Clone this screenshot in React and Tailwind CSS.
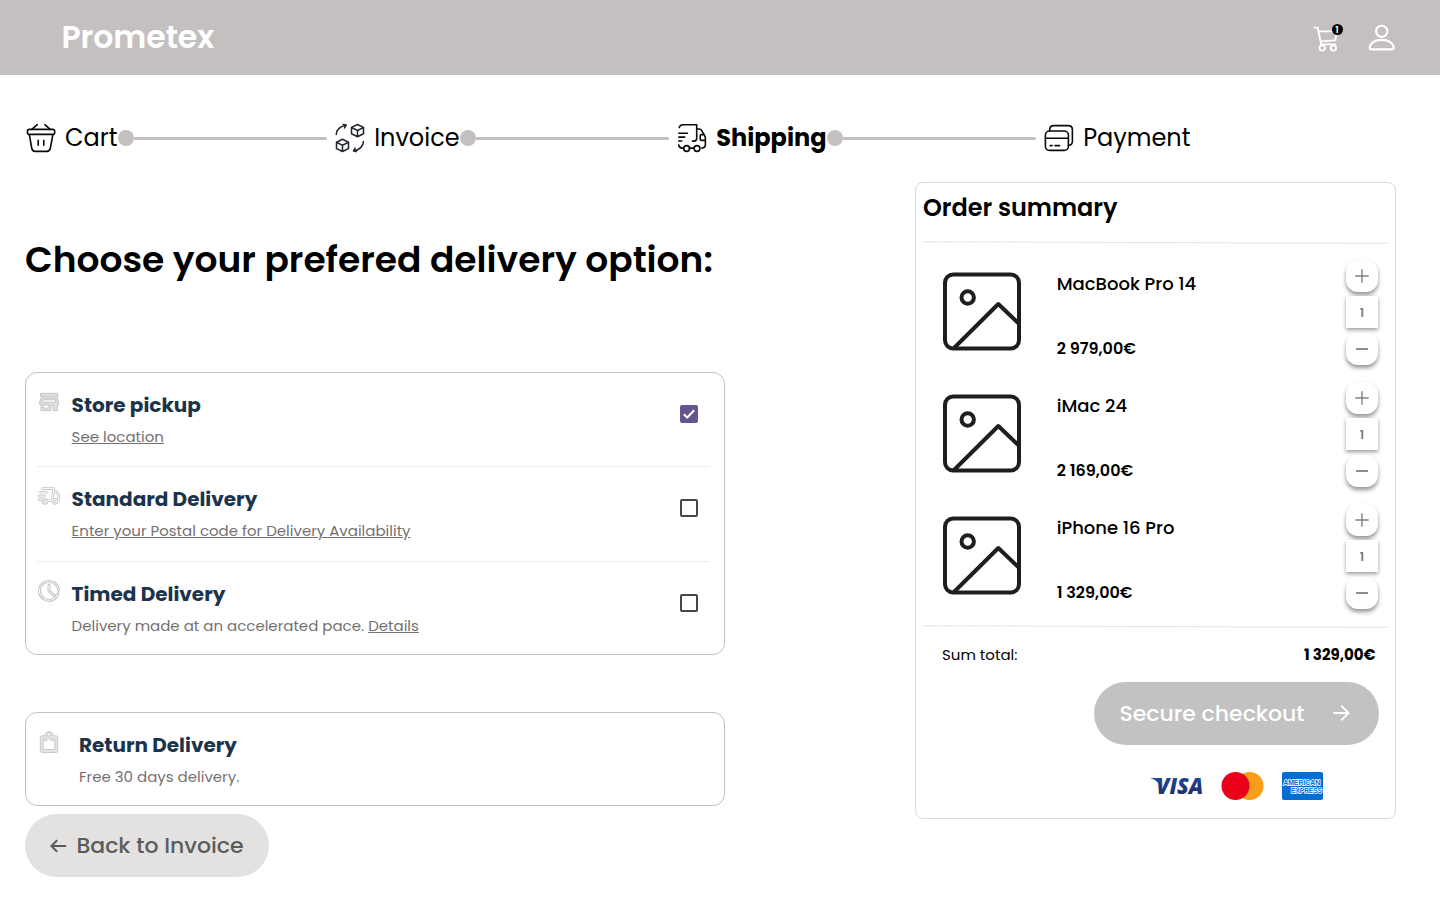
function BasketIcon() {
  return (
    <svg className="size-8 shrink-0" viewBox="0 0 32 32" fill="none" stroke="#0a0a0a" strokeWidth="1.6" strokeLinecap="round" strokeLinejoin="round">
      <path d="M12.300 2.700 6.800 7.400M19.900 2.700l5.300 4.700" />
      <rect x="2.400" y="7.400" width="27.300" height="5" rx="2" />
      <path d="m4.400 12.800 2.300 13.200c.4 2.400 1.200 3.400 3.600 3.400h11.400c2.400 0 3.300-1 3.700-3.400L27.800 12.800M13.200 18.400v4.800M18.800 18.400v4.800" />
    </svg>
  );
}

function TransferIcon() {
  return (
    <svg className="size-8 shrink-0" viewBox="0 0 32 32" fill="none" stroke="#20252e" strokeWidth="1.55" strokeLinecap="round" strokeLinejoin="round">
      <path d="M23.500 2.500 29.500 5.400v6.400L23.500 14.700l-6-2.900V5.400zM17.700 5.600 23.500 8.500l5.800-2.900M23.500 8.500v5.800" />
      <path d="m8.500 17.300 6 2.900v6.400l-6 2.900-6-2.900v-6.400zM2.700 20.400l5.800 2.900 5.800-2.900M8.500 23.300v5.800" />
      <path d="M2.300 12.400C2.300 8 6.200 3.900 12 3.200M9.300 2.400l2.900.7-1.600 2.800" />
      <path d="M29.400 19.600c0 4.400-3.900 8.500-9.700 9.200M22.400 29.600l-2.900-.7 1.600-2.800" />
    </svg>
  );
}

function TruckIcon() {
  return (
    <svg className="size-8 shrink-0" viewBox="0 0 32 32" fill="none" stroke="#0a0a0a" strokeWidth="1.6" strokeLinecap="round" strokeLinejoin="round">
      <path d="M3.200 5.400c.6-1.700 1.900-2.700 4-2.700h13.500v13.500c0 1.700-1.200 2.900-2.900 2.900h-1.400" />
      <path d="M20.700 7h2.500c1 0 1.900.5 2.400 1.400l3 5.300c.7 1.200.8 1.700.8 3v5.800c0 2.300-1.300 3.600-3.600 3.600" />
      <path d="M25.400 12.600c-.8 0-1.200.5-1.200 1.300V17c0 .9.500 1.400 1.400 1.400h3.700M25.400 12.600h2.500" />
      <path d="M2.700 23c.4 1.900 1.700 3.100 3.500 3.100h1.400M13.600 26.100h4.300" />
      <circle cx="10.600" cy="26.500" r="2.900" />
      <circle cx="21" cy="26.500" r="2.900" />
      <path d="M2.800 11.200h8.600M2.800 15.100h5.900M2.800 19h3" />
    </svg>
  );
}

function CardsIcon() {
  return (
    <svg className="size-8 shrink-0" viewBox="0 0 32 32" fill="none" stroke="#0a0a0a" strokeWidth="1.6" strokeLinecap="round" strokeLinejoin="round">
      <rect x="2.400" y="9" width="23" height="19.400" rx="4.200" />
      <path d="M6.700 8.900V7.800c0-2.700 1.500-4.200 4.200-4.200h14.300c2.700 0 4.200 1.500 4.200 4.200v11.500c0 2.600-1.300 4-3.900 4.200M2.400 16.200h22.900M7.200 23.600h1.900M12 23.600h4.600" />
    </svg>
  );
}

function CartIcon() {
  return (
    <svg className="h-8 w-8" viewBox="0 0 32 32" fill="none" stroke="#fff" strokeWidth="1.8" strokeLinecap="round" strokeLinejoin="round">
      <path d="M1.500 5.700h3.200L8.200 22.200M5.800 9.300h18.200l-1.800 9L8.500 19.300M8 22.300h14.600" />
      <circle cx="9.200" cy="26" r="2.700" />
      <circle cx="20.400" cy="26" r="2.700" />
    </svg>
  );
}

function UserIcon() {
  return (
    <svg className="h-8 w-8" viewBox="0 0 32 32" fill="none" stroke="#fff" strokeWidth="2.100">
      <circle cx="15.700" cy="9.300" r="5.600" />
      <path d="M3.700 26c0-4.700 5.100-8.100 12-8.100s12 3.400 12 8.100c0 .9-.4 1.400-1.300 1.400H5C4.100 27.400 3.700 26.900 3.700 26Z" />
    </svg>
  );
}

function Outlined({ d, width = "2.9" }) {
  return (
    <svg className="size-6" viewBox="0 0 24 24" fill="none" strokeLinecap="round" strokeLinejoin="round">
      <path d={d} stroke="#c6c2c1" strokeWidth={width} />
      <path d={d} stroke="#fff" strokeWidth="1" />
    </svg>
  );
}

function StoreIcon() {
  return (
    <svg className="size-6" viewBox="0 0 24 24" fill="none" stroke="#c6c2c1" strokeWidth="0.9" strokeLinejoin="round">
      <path d="M3.500 3.300h17.300v3.600H3.500z" fill="#dedbda" />
      <path d="M3.900 8.100h16.500l1.300 4.200v2h-1.200v6.400h-4.200v-5.400h-2.200v5.400H4V14.300H2.600v-2z" fill="#e0dddc" />
      <path d="M6.200 9.800h12l.6 2.400H5.500z" fill="#fff" />
      <path d="M6.300 15h5.600v3.100H6.300z" fill="#fff" />
    </svg>
  );
}

function BagIcon() {
  return (
    <svg className="size-6" viewBox="0 0 24 24" fill="none" stroke="#c9c5c4" strokeWidth="0.9" strokeLinejoin="round">
      <path d="M7.800 4.800C8 2.300 9.500.6 12 .6s4 1.700 4.200 4.200h3c.9 0 1.500.6 1.500 1.500v13.700c0 .9-.6 1.500-1.500 1.500H4.800c-.9 0-1.500-.6-1.500-1.500V6.300c0-.9.600-1.500 1.500-1.500z" fill="#e6e4e3" />
      <path d="M10 4.800c.1-1.400.8-2.200 2-2.200s1.900.8 2 2.200z" fill="#fff" />
      <path d="M6.200 8h1.600v1.800h1.900V8h4.600v1.800h1.900V8h1.600v10.500H6.200z" fill="#fff" />
    </svg>
  );
}

const truckPath = "M5.800 4.600h11l-1.600 11.500M17 8h2.700l2.300 3.700-.8 4.700h-.8M3.500 8.300h6M2 12.100h5.500M2.500 15.900h2.500M10.800 16.700h4.600M9.800 17.500a1.900 1.900 0 1 1-3.800 0a1.900 1.900 0 1 1 3.800 0M20 17.500a1.900 1.900 0 1 1-3.800 0a1.900 1.900 0 1 1 3.800 0";
const clockPath = "M21.100 14.700A9.500 9.500 0 1 1 21.500 11.500M12 6.200v5.600l5.200 5M18.700 17.200l.8-.8";

const steps = [
  { label: "Cart", icon: <BasketIcon /> },
  { label: "Invoice", icon: <TransferIcon /> },
  { label: "Shipping", icon: <TruckIcon />, active: true },
  { label: "Payment", icon: <CardsIcon /> },
];

function Header() {
  return (
    <header className="flex h-[75px] items-center justify-between bg-[#c4c0bf] pr-[42px] pl-[61.500px]">
      <div className="mb-px text-[31.500px] leading-[48px] font-semibold tracking-[-0.050px] text-white">Prometex</div>
      <div className="flex items-center gap-[21px]">
        <div className="relative">
          <CartIcon />
          <span className="absolute top-[2px] left-[18.500px] flex size-[11px] items-center justify-center rounded-full bg-black pt-px text-[9.500px] leading-none font-semibold text-white">1</span>
        </div>
        <UserIcon />
      </div>
    </header>
  );
}

function Stepper() {
  return (
    <nav className="flex h-9 items-center">
      {steps.map((s, i) => (
        <div key={s.label} className="flex items-center">
          {s.icon}
          <span className={s.active ? "ml-2 text-2xl font-bold" : "ml-2 text-2xl"}>{s.label}</span>
          {i < steps.length - 1 && (
            <div className="mr-[7.100px] ml-[0.500px] flex w-[209.100px] items-center">
              <span className="size-4 shrink-0 rounded-full bg-[#c4c0bf]" />
              <span className="h-[3px] flex-1 rounded-r-full bg-[#c4c0bf]" />
            </div>
          )}
        </div>
      ))}
    </nav>
  );
}

function Checkbox({ checked }) {
  if (!checked) return <span className="mt-[32px] size-[18px] rounded-[2px] border-2 border-[#49454f]" />;
  return (
    <span className="mt-[32px] flex size-[18px] items-center justify-center rounded-[2px] bg-[#65558f]">
      <svg className="size-[18px]" viewBox="0 0 18 18" fill="none" stroke="#fff" strokeWidth="2">
        <path d="m3.800 9.200 3.400 3.300 7-7.200" />
      </svg>
    </span>
  );
}

function Option({ icon, title, checked, last, children }) {
  return (
    <div className={last ? "flex h-[94px] items-start" : "flex h-[94.300px] items-start border-b border-[#ececec]"}>
      <div className="mt-[17px] w-[34.600px]">{icon}</div>
      <div className="mt-[17px] flex-1">
        <h3 className="text-xl leading-[30px] font-bold text-[#1c344b]">{title}</h3>
        <p className="mt-[6px] text-[15px] leading-[22px] text-[#757070]">{children}</p>
      </div>
      <div className="flex w-[30px]"><Checkbox checked={checked} /></div>
    </div>
  );
}

function QuantityCell({ children, square }) {
  return (
    <div className={square
      ? "flex size-8 items-center justify-center bg-white pt-px text-xs font-semibold text-[#7a7a7a] shadow-[0_2px_4px_rgba(0,0,0,0.4)]"
      : "flex size-8 items-center justify-center rounded-xl bg-white shadow-[0_3px_4px_rgba(0,0,0,0.42)]"}>
      {children}
    </div>
  );
}

function Quantity() {
  return (
    <div className="flex flex-col gap-[4.800px]">
      <QuantityCell>
        <svg className="size-4" viewBox="0 0 16 16" stroke="#828282" strokeWidth="1.400"><path d="M1.300 8h13.400M8 1.300v13.400" /></svg>
      </QuantityCell>
      <QuantityCell square>1</QuantityCell>
      <QuantityCell>
        <svg className="size-4" viewBox="0 0 16 16" stroke="#828282" strokeWidth="1.800"><path d="M2 8h12" /></svg>
      </QuantityCell>
    </div>
  );
}

function Item({ name, price }) {
  return (
    <div className="flex h-[122px] items-start pr-[17px] pl-[27px]">
      <svg className="mt-[13px] size-[78px] overflow-visible" viewBox="0 0 78 78" fill="none" stroke="#1e1e1e" strokeWidth="4">
        <rect x="2" y="1.500" width="74" height="74" rx="8.200" />
        <circle cx="24.700" cy="24.500" r="6.200" />
        <path d="m11 75 44.300-44L76 50.800" strokeLinejoin="round" />
      </svg>
      <div className="ml-[35.700px] flex-1">
        <p className="mt-[10px] text-lg leading-[28px] font-medium">{name}</p>
        <p className="mt-[39px] text-base leading-6 font-semibold">{price}</p>
      </div>
      <Quantity />
    </div>
  );
}

function Payments() {
  return (
    <div className="mt-[27px] ml-[234px] flex items-center">
      <svg className="h-7 w-[54px] overflow-visible" viewBox="0 0 54 28">
        <defs>
          <linearGradient id="visa" x1="0" y1="0" x2="0" y2="1">
            <stop offset="0" stopColor="#2151a3" />
            <stop offset="1" stopColor="#212560" />
          </linearGradient>
        </defs>
        <path d="M.5 6h7c1.400 0 2 .5 2.300 1.800l1.500 8C9 11 5.600 7.500.5 6.300Z" fill="url(#visa)" />
        <text x="6.300" y="22.200" textLength="47" lengthAdjust="spacingAndGlyphs" fontFamily="Open Sans, sans-serif" fontStyle="italic" fontWeight="800" fontSize="22.500" fill="url(#visa)">VISA</text>
      </svg>
      <svg className="ml-[17px] h-7 w-[43px]" viewBox="0 0 43 28">
        <circle cx="28.500" cy="14" r="14" fill="#f79f1a" />
        <circle cx="14.500" cy="14" r="14" fill="#ea001b" />
      </svg>
      <svg className="ml-[18px] h-7 w-[41px] overflow-visible" viewBox="0 0 41 28">
        <rect width="41" height="28" rx="2" fill="#016fd0" />
        <g fontFamily="Liberation Sans, sans-serif" fontWeight="700" fontSize="7.500" fill="#016fd0" stroke="#fff" strokeWidth="1.500" paintOrder="stroke">
          <text x="1.200" y="13" textLength="37" lengthAdjust="spacingAndGlyphs">AMERICAN</text>
          <text x="9" y="21.300" textLength="31" lengthAdjust="spacingAndGlyphs">EXPRESS</text>
        </g>
      </svg>
    </div>
  );
}

export default function App() {
  return (
    <div className="h-[900px] overflow-hidden bg-white font-['Poppins',sans-serif] text-black">
      <Header />
      <div className="pt-[45px] pr-11 pl-[25px]">
        <Stepper />
        <div className="mt-[26px] flex items-start justify-between">
          <main className="w-[700px]">
            <h1 className="mt-[51px] text-4xl leading-[54px] font-semibold whitespace-nowrap">Choose your prefered delivery option:</h1>
            <section className="mt-[85px] h-[283px] rounded-xl border border-[#c4c0bf] pr-[14px] pl-[11px]">
              <Option icon={<StoreIcon />} title="Store pickup" checked><a className="underline">See location</a></Option>
              <Option icon={<Outlined d={truckPath} width="2.600" />} title="Standard Delivery"><a className="underline">Enter your Postal code for Delivery Availability</a></Option>
              <Option icon={<Outlined d={clockPath} />} title="Timed Delivery" last>Delivery made at an accelerated pace. <a className="underline">Details</a></Option>
            </section>
            <section className="mt-[57px] flex h-[94px] rounded-xl border border-[#c4c0bf] pl-[11px]">
              <div className="mt-[18px] w-[42px]"><BagIcon /></div>
              <div className="mt-[17px]">
                <h3 className="text-xl leading-[30px] font-bold text-[#1c344b]">Return Delivery</h3>
                <p className="mt-[6px] text-[15px] leading-[22px] text-[#757070]">Free 30 days delivery.</p>
              </div>
            </section>
            <button className="mt-2 flex h-[63px] w-[244px] items-center rounded-full bg-[#e3e2e1] pl-[25px] text-[22px] font-medium text-[#5b5b5b]">
              <svg className="mr-[9.400px] h-4 w-[17px]" viewBox="0 0 17 16" fill="none" stroke="#5b5b5b" strokeWidth="2"><path d="M16.200 8H1.500M7.200 2.200 1.400 8l5.800 5.800" /></svg>
              Back to Invoice
            </button>
          </main>
          <aside className="h-[637px] w-[481px] rounded-lg border border-[#d9d9d9]">
            <h2 className="mt-[7px] ml-[7px] text-2xl leading-9 font-semibold tracking-[-0.02px]">Order summary</h2>
            <div className="mt-[15.500px] ml-[7px] h-px w-[465px] rotate-[0.2deg] bg-[#e3e3e3]" />
            <div className="mt-[17px]">
              <Item name="MacBook Pro 14" price="2 979,00€" />
              <Item name="iMac 24" price="2 169,00€" />
              <Item name="iPhone 16 Pro" price="1 329,00€" />
            </div>
            <div className="ml-[7px] h-px w-[465px] rotate-[0.2deg] bg-[#e3e3e3]" />
            <div className="mt-[16px] flex justify-between pr-[19.500px] pl-[26px] text-[15px] leading-6">
              <span>Sum total:</span>
              <span className="font-bold">1 329,00€</span>
            </div>
            <button className="mt-[15px] ml-[178px] flex h-[63px] w-[285px] items-center rounded-full bg-[#c2c2c2] pl-[25.500px] text-[22px] font-medium text-white">
              Secure checkout
              <svg className="ml-[27px] size-[18px]" viewBox="0 0 18 18" fill="none" stroke="#fff" strokeWidth="1.800"><path d="M1.300 9h15M9.200 1.700 16.500 9l-7.300 7.300" /></svg>
            </button>
            <Payments />
          </aside>
        </div>
      </div>
    </div>
  );
}
